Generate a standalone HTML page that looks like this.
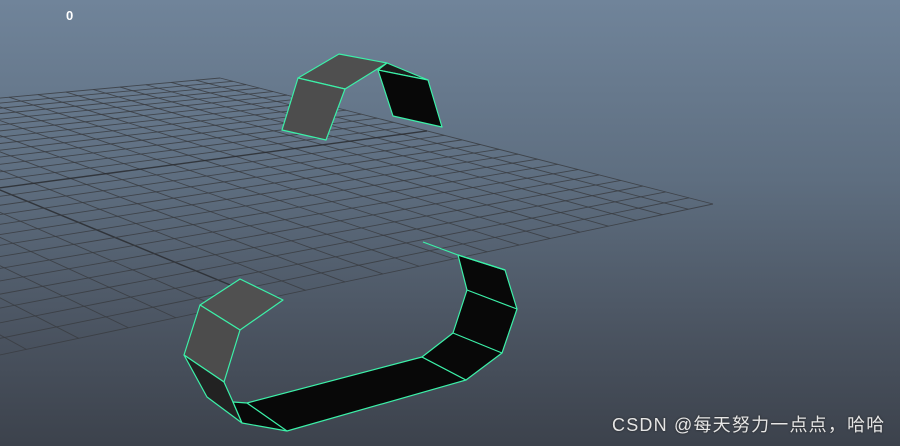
<!DOCTYPE html>
<html><head><meta charset="utf-8"><style>
html,body{margin:0;padding:0;width:900px;height:446px;overflow:hidden;}
body{background:linear-gradient(180deg,#70849a 0%,#5e6e80 40%,#4a5360 75%,#3c424c 100%);position:relative;font-family:"Liberation Sans",sans-serif;}
svg{position:absolute;left:0;top:0;display:block;}
#zero{position:absolute;left:66px;top:9px;color:#fff;font-size:13px;font-weight:bold;line-height:14px;}
#wm{position:absolute;left:612px;top:414px;color:#e6e6e6;font-size:18px;line-height:22px;letter-spacing:1.2px;white-space:nowrap;font-family:"Liberation Sans","Noto Sans CJK SC",sans-serif;text-shadow:0 0 2px #222;}
</style></head><body>
<svg id="g" width="900" height="446" viewBox="0 0 900 446"></svg>
<svg width="900" height="446" viewBox="0 0 900 446" stroke="#3cf0a8" stroke-width="1.2" stroke-linejoin="round">
<polygon points="298,78 339,54 387,63 345,89" fill="#4f4f4f"/>
<polygon points="298,78 345,89 326,140 282,130" fill="#4d4d4d"/>
<polygon points="387,63 428,80 378,70" fill="#1c1c1c"/>
<polygon points="378,70 428,80 442,127 393,116" fill="#080808"/>
<polygon points="200,305 240,279 283,300 240,330" fill="#505050"/>
<polygon points="200,305 240,330 224,382 184,355" fill="#4c4c4c"/>
<polygon points="184,355 224,382 233,402 242,423 207,397" fill="#222"/>
<polygon points="233,402 247,403 422,357 466,380 287,431 242,423" fill="#080808"/>
<polygon points="422,357 453,333 467,290 458,255 505,270 517,309 502,353 466,380" fill="#080808"/>
<polyline points="453,333 502,353" fill="none"/>
<polyline points="467,290 517,309" fill="none"/>
<polyline points="247,403 287,431" fill="none"/>
<polyline points="423,242 458,255 505,270" fill="none"/>
</svg>
<div id="zero">0</div>
<div id="wm">CSDN @每天努力一点点，哈哈</div>
<script>
(function(){
function solve(A,b){var n=8;for(var i=0;i<n;i++){var m=i;for(var k=i+1;k<n;k++)if(Math.abs(A[k][i])>Math.abs(A[m][i]))m=k;var t=A[i];A[i]=A[m];A[m]=t;t=b[i];b[i]=b[m];b[m]=t;for(var k=i+1;k<n;k++){var f=A[k][i]/A[i][i];for(var j=i;j<n;j++)A[k][j]-=f*A[i][j];b[k]-=f*b[i];}}var x=new Array(n);for(var i=n-1;i>=0;i--){var s=b[i];for(var j=i+1;j<n;j++)s-=A[i][j]*x[j];x[i]=s/A[i][i];}return x;}
var src=[[0,0],[1,0],[1,1],[0,1]],dst=[[220,78],[713,204],[-600,482],[-800,171]];
var A=[],b=[];for(var i=0;i<4;i++){var u=src[i][0],v=src[i][1],X=dst[i][0],Y=dst[i][1];A.push([u,v,1,0,0,0,-u*X,-v*X]);b.push(X);A.push([0,0,0,u,v,1,-u*Y,-v*Y]);b.push(Y);}
var h=solve(A,b);
function P(u,v){var w=h[6]*u+h[7]*v+1;return [(h[0]*u+h[1]*v+h[2])/w,(h[3]*u+h[4]*v+h[5])/w];}
var N=28,s='';
for(var i=0;i<=N;i++){var t=i/N;var c=(i==N/2)?'#2a2c30':'#3a3d42';var sw=(i==N/2)?1.4:0.9;
var p=P(t,0),q=P(t,1);s+='<line x1="'+p[0]+'" y1="'+p[1]+'" x2="'+q[0]+'" y2="'+q[1]+'" stroke="'+c+'" stroke-width="'+sw+'" opacity="0.85"/>';
p=P(0,t);q=P(1,t);s+='<line x1="'+p[0]+'" y1="'+p[1]+'" x2="'+q[0]+'" y2="'+q[1]+'" stroke="'+c+'" stroke-width="'+sw+'" opacity="0.85"/>';}
document.getElementById('g').innerHTML=s;
})();
</script>
</body></html>
